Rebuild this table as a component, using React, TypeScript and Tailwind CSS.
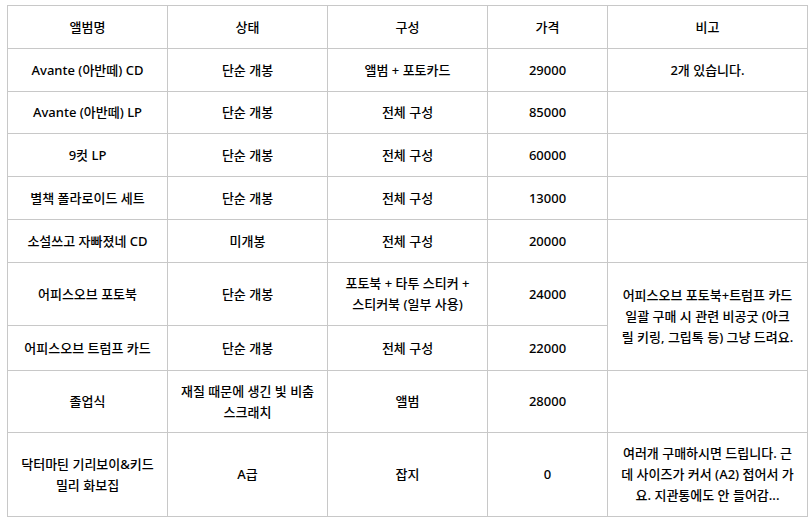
import React from "react";

const td = "border border-[#c8c8c8] text-center align-middle px-2 py-0";

export default function App() {
  return (
    <div
      className="w-[812px] h-[520px] bg-white text-black overflow-hidden pt-[5px] pl-[7px]"
      style={{ fontFamily: '"Noto Sans", "Noto Sans CJK KR", sans-serif' }}
    >
      <table className="table-fixed border-collapse w-[800px] text-[13px] leading-[21px] font-medium">
        <colgroup>
          <col className="w-[160px]" />
          <col className="w-[160px]" />
          <col className="w-[160px]" />
          <col className="w-[120px]" />
          <col className="w-[200px]" />
        </colgroup>
        <tbody>
          <tr className="h-[43px]">
            <td className={td}>앨범명</td>
            <td className={td}>상태</td>
            <td className={td}>구성</td>
            <td className={td}>가격</td>
            <td className={td}>비고</td>
          </tr>
          <tr className="h-[43px]">
            <td className={td}>Avante (아반떼) CD</td>
            <td className={td}>단순 개봉</td>
            <td className={td}>앨범 + 포토카드</td>
            <td className={td}>29000</td>
            <td className={td}>2개 있습니다.</td>
          </tr>
          <tr className="h-[42px]">
            <td className={td}>Avante (아반떼) LP</td>
            <td className={td}>단순 개봉</td>
            <td className={td}>전체 구성</td>
            <td className={td}>85000</td>
            <td className={td}></td>
          </tr>
          <tr className="h-[43px]">
            <td className={td}>9컷 LP</td>
            <td className={td}>단순 개봉</td>
            <td className={td}>전체 구성</td>
            <td className={td}>60000</td>
            <td className={td}></td>
          </tr>
          <tr className="h-[43px]">
            <td className={td}>별책 폴라로이드 세트</td>
            <td className={td}>단순 개봉</td>
            <td className={td}>전체 구성</td>
            <td className={td}>13000</td>
            <td className={td}></td>
          </tr>
          <tr className="h-[43px]">
            <td className={td}>소설쓰고 자빠졌네 CD</td>
            <td className={td}>미개봉</td>
            <td className={td}>전체 구성</td>
            <td className={td}>20000</td>
            <td className={td}></td>
          </tr>
          <tr className="h-[63px]">
            <td className={td}>어피스오브 포토북</td>
            <td className={td}>단순 개봉</td>
            <td className={td}>
              포토북 + 타투 스티커 +<br />
              스티커북 (일부 사용)
            </td>
            <td className={td}>24000</td>
            <td className={td} rowSpan={2}>
              어피스오브 포토북+트럼프 카드
              <br />
              일괄 구매 시 관련 비공굿 (아크
              <br />릴 키링, 그립톡 등) 그냥 드려요.
            </td>
          </tr>
          <tr className="h-[45px]">
            <td className={td}>어피스오브 트럼프 카드</td>
            <td className={td}>단순 개봉</td>
            <td className={td}>전체 구성</td>
            <td className={td}>22000</td>
          </tr>
          <tr className="h-[62px]">
            <td className={td}>졸업식</td>
            <td className={td}>
              재질 때문에 생긴 빛 비춤
              <br />
              스크래치
            </td>
            <td className={td}>앨범</td>
            <td className={td}>28000</td>
            <td className={td}></td>
          </tr>
          <tr className="h-[84px]">
            <td className={td}>
              닥터마틴 기리보이&amp;키드
              <br />
              밀리 화보집
            </td>
            <td className={td}>A급</td>
            <td className={td}>잡지</td>
            <td className={td}>0</td>
            <td className={td}>
              여러개 구매하시면 드립니다. 근
              <br />데 사이즈가 커서 (A2) 접어서 가
              <br />요. 지관통에도 안 들어감...
            </td>
          </tr>
        </tbody>
      </table>
    </div>
  );
}
